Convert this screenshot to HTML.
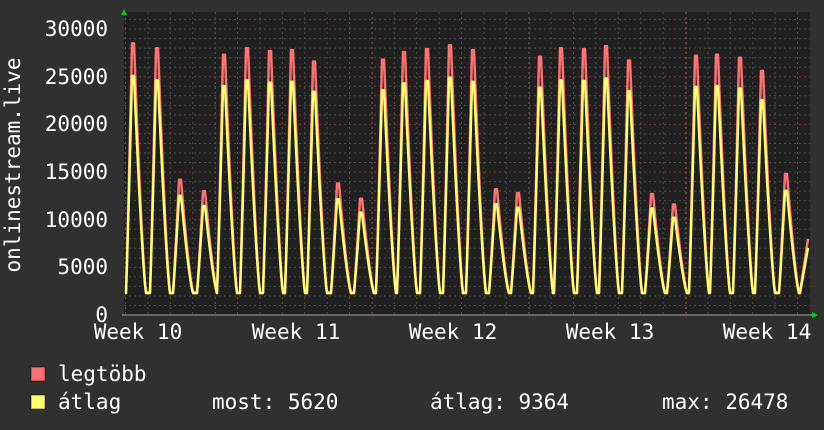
<!DOCTYPE html><html><head><meta charset="utf-8"><style>
html,body{margin:0;padding:0;background:#303030;width:824px;height:430px;overflow:hidden}
svg{display:block}
text{font-family:"DejaVu Sans Mono","Liberation Mono",monospace;fill:#fff;font-size:21px}
</style></head><body>
<svg id="g" width="824" height="430" xmlns="http://www.w3.org/2000/svg">
<rect x="0" y="0" width="824" height="430" fill="#303030"/>
<rect x="124" y="12" width="686" height="304" fill="#202020"/>
<g id="grid"></g>
<g id="data"></g>
<line x1="122" y1="315" x2="812" y2="315" stroke="#aaa" stroke-width="1"/>
<polygon points="121,15 127,15 124,9" fill="#0c0"/>
<polygon points="812,312 812,318 818,315" fill="#0c0"/>
<g text-anchor="end">
<text x="108" y="36">30000</text><text x="108" y="84">25000</text><text x="108" y="131">20000</text>
<text x="108" y="179">15000</text><text x="108" y="227">10000</text><text x="108" y="274">5000</text><text x="108" y="322">0</text>
</g>
<text transform="translate(20,165) rotate(-90)" text-anchor="middle">onlinestream.live</text>
<g text-anchor="middle" style="font-size:21.5px">
<text x="138" y="339">Week 10</text><text x="296" y="339">Week 11</text><text x="453" y="339">Week 12</text>
<text x="610" y="339">Week 13</text><text x="767" y="339">Week 14</text>
</g>
<rect x="31" y="367" width="14" height="14" fill="#ff7070" stroke="#000" stroke-width="0.5"/>
<rect x="31" y="395" width="14" height="14" fill="#ffff70" stroke="#000" stroke-width="0.5"/>
<g style="font-size:21.5px">
<text x="58" y="381">legtöbb</text>
<text x="58" y="409">átlag</text>
<text x="212" y="409">most: 5620</text>
<text x="430" y="409">átlag: 9364</text>
<text x="662" y="409">max: 26478</text>
</g>
</svg>
<script>
var NS="http://www.w3.org/2000/svg";
function el(p,t,a){var e=document.createElementNS(NS,t);for(var k in a)e.setAttribute(k,a[k]);p.appendChild(e);return e;}
var grid=document.getElementById('grid'),data=document.getElementById('data');
function Y(v){return 315-v*0.00953;}
for(var v=1000;v<=31000;v+=1000){var y=Y(v);var maj=v%5000==0;
el(grid,'line',{x1:124,x2:810,y1:y,y2:y,stroke:maj?'#6a3a3a':'#4a4a4a','stroke-dasharray':'2,3','stroke-width':1});}
for(var x=125.5;x<810;x+=22.4){el(grid,'line',{x1:x,x2:x,y1:12,y2:315,stroke:'#4a4a4a','stroke-dasharray':'2,3'});}
for(var x=215.5;x<810;x+=157){el(grid,'line',{x1:x,x2:x,y1:12,y2:318,stroke:'#6a3a3a','stroke-dasharray':'2,3'});}
var peaks=[[133,28500],[157,28000],[180,14200],[204,13000],[224,27300],[247,28000],[270,27700],[292,27800],[314,26600],[338,13800],[361,12200],[383,26800],[404,27600],[427,27900],[450,28300],[473,27800],[496,13200],[518,12800],[540,27100],[561,28000],[584,27900],[606,28200],[629,26700],[652,12700],[674,11600],[696,27200],[717,27300],[740,27000],[762,25600],[786,14800]];
function f(x,scale,base){var v=base;
for(var i=0;i<peaks.length;i++){var px=peaks[i][0],h=peaks[i][1]*scale-base;var d=x-px;var s;
if(d<-1)s=Math.pow(Math.max(0,1+(d+1)/6),1.1);else if(d<=1)s=1;else s=Math.pow(Math.max(0,1-(d-1)/12),1.3);
v=Math.max(v,base+h*s);}
if(x>800)v=Math.max(v,base+(x-800)/8*(8000*scale-base));return v;}
function path(scale,base){var d='';for(var x=125;x<=808;x++){d+=(x==125?'M':'L')+x+','+Y(f(x,scale,base)).toFixed(1);}return d;}
el(data,'path',{d:path(1,2400),fill:'none',stroke:'#ff7070','stroke-width':2.5,'stroke-linejoin':'round'});
el(data,'path',{d:path(0.88,2300),fill:'none',stroke:'#ffff70','stroke-width':2.5,'stroke-linejoin':'round'});
</script>
</body></html>
